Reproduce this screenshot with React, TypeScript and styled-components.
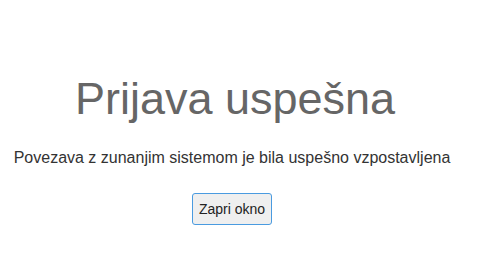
import styled, { createGlobalStyle } from 'styled-components';

const GlobalStyle = createGlobalStyle`
  html, body {
    margin: 0;
    padding: 0;
    background: #ffffff;
  }
  body {
    font-family: "Liberation Sans", Arial, sans-serif;
  }
`;

const Page = styled.main`
  width: 464px;
  padding-top: 72px;
  text-align: center;
`;

const Heading = styled.h1`
  margin: 0;
  padding-left: 6px;
  font-size: 45px;
  font-weight: normal;
  line-height: 54px;
  color: #666666;
`;

const Message = styled.p`
  margin: 21px 0 0;
  font-size: 16px;
  line-height: 22px;
  color: #333333;
`;

const CloseButton = styled.button`
  margin-top: 24px;
  padding: 7px 6px;
  font-family: inherit;
  font-size: 14px;
  line-height: 16px;
  color: #222222;
  background: #efefef;
  border: 1px solid #4a9be0;
  border-radius: 3px;
  cursor: pointer;
`;

export default function App() {
  return (
    <>
      <GlobalStyle />
      <Page>
        <Heading>Prijava uspešna</Heading>
        <Message>Povezava z zunanjim sistemom je bila uspešno vzpostavljena</Message>
        <CloseButton onClick={() => window.close()}>Zapri okno</CloseButton>
      </Page>
    </>
  );
}
